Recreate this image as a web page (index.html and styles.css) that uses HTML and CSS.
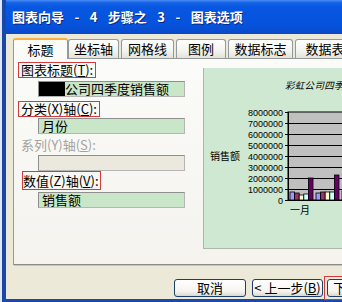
FILE: index.html
```html
<!DOCTYPE html>
<html>
<head>
<meta charset="utf-8">
<link rel="stylesheet" href="styles.css">
</head>
<body>
<div class="window">
  <div class="titlebar"><span class="title">图表向导 - 4 步骤之 3 - 图表选项</span></div>
  <div class="client">
    <div class="tabs">
      <div class="tab active w1">标题</div>
      <div class="tab w2">坐标轴</div>
      <div class="tab w3">网格线</div>
      <div class="tab w4">图例</div>
      <div class="tab w5">数据标志</div>
      <div class="tab w6">数据表</div>
    </div>
    <div class="panel">
      <div class="form">
        <div class="lbl boxed">图表标题(<u>T</u>):</div>
        <div class="inp g1"><span class="redact"></span>公司四季度销售额</div>
        <div class="lbl boxed g2">分类(X)轴(<u>C</u>):</div>
        <div class="inp g3">月份</div>
        <div class="lbl dis g4">系列(Y)轴(<u>S</u>):</div>
        <div class="inp off g5"></div>
        <div class="lbl boxed tall shift">数值(Z)轴(<u>V</u>):</div>
        <div class="inp g6">销售额</div>
      </div>
      <div class="chart">
        <svg width="200" height="181" viewBox="0 0 200 181">
          <text class="ctitle" x="81" y="21">彩虹公司四季度销售额</text>
          <text class="ylab" x="6" y="92">销售额</text>
          <rect x="84" y="44" width="130" height="88" fill="#c0c0c0" stroke="#000" stroke-width="1"/>
          <g stroke="#000" stroke-width="1">
            <line x1="84" y1="55.5" x2="214" y2="55.5"/>
            <line x1="84" y1="66.5" x2="214" y2="66.5"/>
            <line x1="84" y1="77.5" x2="214" y2="77.5"/>
            <line x1="84" y1="88.5" x2="214" y2="88.5"/>
            <line x1="84" y1="99.5" x2="214" y2="99.5"/>
            <line x1="84" y1="110.5" x2="214" y2="110.5"/>
            <line x1="84" y1="121.5" x2="214" y2="121.5"/>
            <line x1="84.5" y1="44" x2="84.5" y2="133"/>
            <line x1="81" y1="44.5" x2="84" y2="44.5"/>
            <line x1="81" y1="55.5" x2="84" y2="55.5"/>
            <line x1="81" y1="66.5" x2="84" y2="66.5"/>
            <line x1="81" y1="77.5" x2="84" y2="77.5"/>
            <line x1="81" y1="88.5" x2="84" y2="88.5"/>
            <line x1="81" y1="99.5" x2="84" y2="99.5"/>
            <line x1="81" y1="110.5" x2="84" y2="110.5"/>
            <line x1="81" y1="121.5" x2="84" y2="121.5"/>
            <line x1="81" y1="132.5" x2="214" y2="132.5"/>
          </g>
          <g class="nums">
            <text x="79" y="47.5">8000000</text>
            <text x="79" y="58.5">7000000</text>
            <text x="79" y="69.5">6000000</text>
            <text x="79" y="80.5">5000000</text>
            <text x="79" y="91.5">4000000</text>
            <text x="79" y="102.5">3000000</text>
            <text x="79" y="113.5">2000000</text>
            <text x="79" y="124.5">1000000</text>
            <text x="79" y="135.5">0</text>
          </g>
          <g stroke="#000" stroke-width="0.8">
            <rect x="86" y="124" width="4.6" height="8" fill="#9999ff"/>
            <rect x="90.6" y="125" width="4.6" height="7" fill="#993366"/>
            <rect x="95.2" y="127" width="4.6" height="5" fill="#ffffcc"/>
            <rect x="99.8" y="126" width="4.6" height="6" fill="#ccffff"/>
            <rect x="104.4" y="110" width="4.6" height="22" fill="#660066"/>
            <rect x="112" y="125" width="4.6" height="7" fill="#9999ff"/>
            <rect x="116.6" y="124" width="4.6" height="8" fill="#993366"/>
            <rect x="121.2" y="124" width="4.6" height="8" fill="#ffffcc"/>
            <rect x="125.8" y="124" width="4.6" height="8" fill="#ccffff"/>
            <rect x="130.4" y="107" width="4.6" height="25" fill="#660066"/>
            <rect x="138" y="123" width="4.6" height="9" fill="#9999ff"/>
          </g>
          <text class="xlab" x="86" y="146">一月</text>
          <text class="xlab" x="138" y="146">二月</text>
        </svg>
      </div>
    </div>
    <div class="buttons">
      <div class="btn b1">取消</div>
      <div class="btn b2">&lt; 上一步(<u>B</u>)</div>
      <div class="mark"><div class="btn b3">下一步(<u>N</u>) &gt;</div></div>
    </div>
  </div>
</div>
</body>
</html>
```
FILE: styles.css
```css
html, body {
  margin: 0;
  padding: 0;
  width: 342px;
  height: 302px;
  overflow: hidden;
  background: #dfe7f7;
}
.window {
  width: 430px;
  height: 299px;
  margin-left: 2px;
  border-left: 4px solid #1a48a6;
  border-bottom: 3px solid #1c49a8;
  background: #ece9d8;
  display: flex;
  flex-direction: column;
  font-family: "Noto Sans CJK SC", sans-serif;
  font-size: 13px;
  color: #000;
}
.titlebar {
  height: 34px;
  flex: none;
  display: flex;
  align-items: center;
  padding-left: 6px;
  background: linear-gradient(#4a8cf5 0%, #1463e6 8%, #0857e0 20%, #0553dc 75%, #0a49c8 100%);
}
.title {
  color: #fff;
  font-weight: bold;
  font-size: 13px;
  word-spacing: 7.5px;
  white-space: pre;
  line-height: 16px;
  text-shadow: 1px 1px 0 #0a2a88;
}
.client {
  flex: 1;
  padding: 4px 0 0 7px;
  display: flex;
  flex-direction: column;
}
.tabs {
  display: flex;
  align-items: flex-end;
  height: 20px;
  position: relative;
  z-index: 2;
}
.tab {
  box-sizing: border-box;
  height: 19px;
  margin-right: 2px;
  border: 1px solid #919b9c;
  border-bottom: none;
  border-radius: 3px 3px 0 0;
  background: linear-gradient(#ffffff, #f3f3ef 60%, #e4e2d8);
  text-align: center;
  line-height: 17px;
  font-size: 13px;
}
.tab.active {
  height: 21px;
  margin-right: 0;
  margin-bottom: -1px;
  border-top: 2px solid #f5b13b;
  background: #fbfbf8;
  line-height: 19px;
}
.w1 { width: 55px; }
.w2 { width: 51px; }
.w3 { width: 53px; }
.w4 { width: 50px; }
.w5 { width: 65px; }
.w6 { width: 60px; }
.panel {
  box-sizing: border-box;
  height: 207px;
  width: 420px;
  border: 1px solid #919b9c;
  border-bottom-color: #8a8a86;
  background: linear-gradient(#fbfbf9, #f4f3ee);
  box-shadow: 1px 1px 0 #c9c6b6;
  display: flex;
  flex: none;
}
.form {
  box-sizing: border-box;
  width: 188px;
  padding: 3px 0 0 4px;
  flex: none;
}
.lbl {
  box-sizing: border-box;
  width: fit-content;
  height: 16px;
  line-height: 14px;
  padding: 0 2px;
  border: 1px solid transparent;
  white-space: nowrap;
}
.lbl.boxed { border-color: #d03b3b; }
.lbl.dis { color: #a3a3a0; }
.lbl.tall { height: 19px; line-height: 17px; padding: 0 1px 0 0; }
.lbl.shift { margin-left: 4px; }
.inp {
  box-sizing: border-box;
  margin-left: 20px;
  width: 147px;
  height: 16px;
  border: 1px solid #8e8e8e;
  border-right-color: #b5b5b5;
  border-bottom-color: #b5b5b5;
  background: #c9e6c9;
  line-height: 14px;
  padding-left: 3px;
  display: flex;
  align-items: center;
  white-space: nowrap;
}
.inp.off {
  background: #ebe9de;
  height: 16px;
}
.redact {
  display: inline-block;
  width: 26px;
  height: 14px;
  background: #000;
  margin-left: -3px;
}
.g1 { margin-top: 3px; }
.g2 { margin-top: 4px; }
.g3 { margin-top: 1px; }
.g4 { margin-top: 3px; }
.g5 { margin-top: 2px; }
.g6 { margin-top: 2px; }
.chart {
  margin-top: 9px;
  margin-left: 1px;
  width: 200px;
  height: 181px;
  box-sizing: border-box;
  background: #cfe8d2;
  border-left: 1px solid #a9b8a9;
  border-bottom: 1px solid #a9b8a9;
}
.chart svg { display: block; }
.ctitle {
  font-family: "Noto Sans CJK SC", sans-serif;
  font-size: 9.5px;
  font-style: italic;
  letter-spacing: 0.3px;
}
.ylab, .xlab {
  font-family: "Noto Sans CJK SC", sans-serif;
  font-size: 10px;
}
.nums text {
  font-family: "Liberation Sans", sans-serif;
  font-size: 9px;
  text-anchor: end;
}
.buttons {
  margin-top: 11px;
  padding-left: 161px;
  display: flex;
  align-items: center;
}
.btn {
  box-sizing: border-box;
  height: 18px;
  border: 1px solid #1c3f6e;
  border-radius: 3px;
  background: linear-gradient(#ffffff, #f5f4ef 70%, #dcd8cc);
  text-align: center;
  line-height: 16px;
  font-size: 13px;
  white-space: nowrap;
}
.b1 { width: 72px; margin-right: 6px; }
.b2 { width: 71px; margin-right: 1px; }
.b3 { width: 80px; }
.mark {
  border: 1px solid #d03b3b;
  padding: 2px 0 2px 2px;
}
```
